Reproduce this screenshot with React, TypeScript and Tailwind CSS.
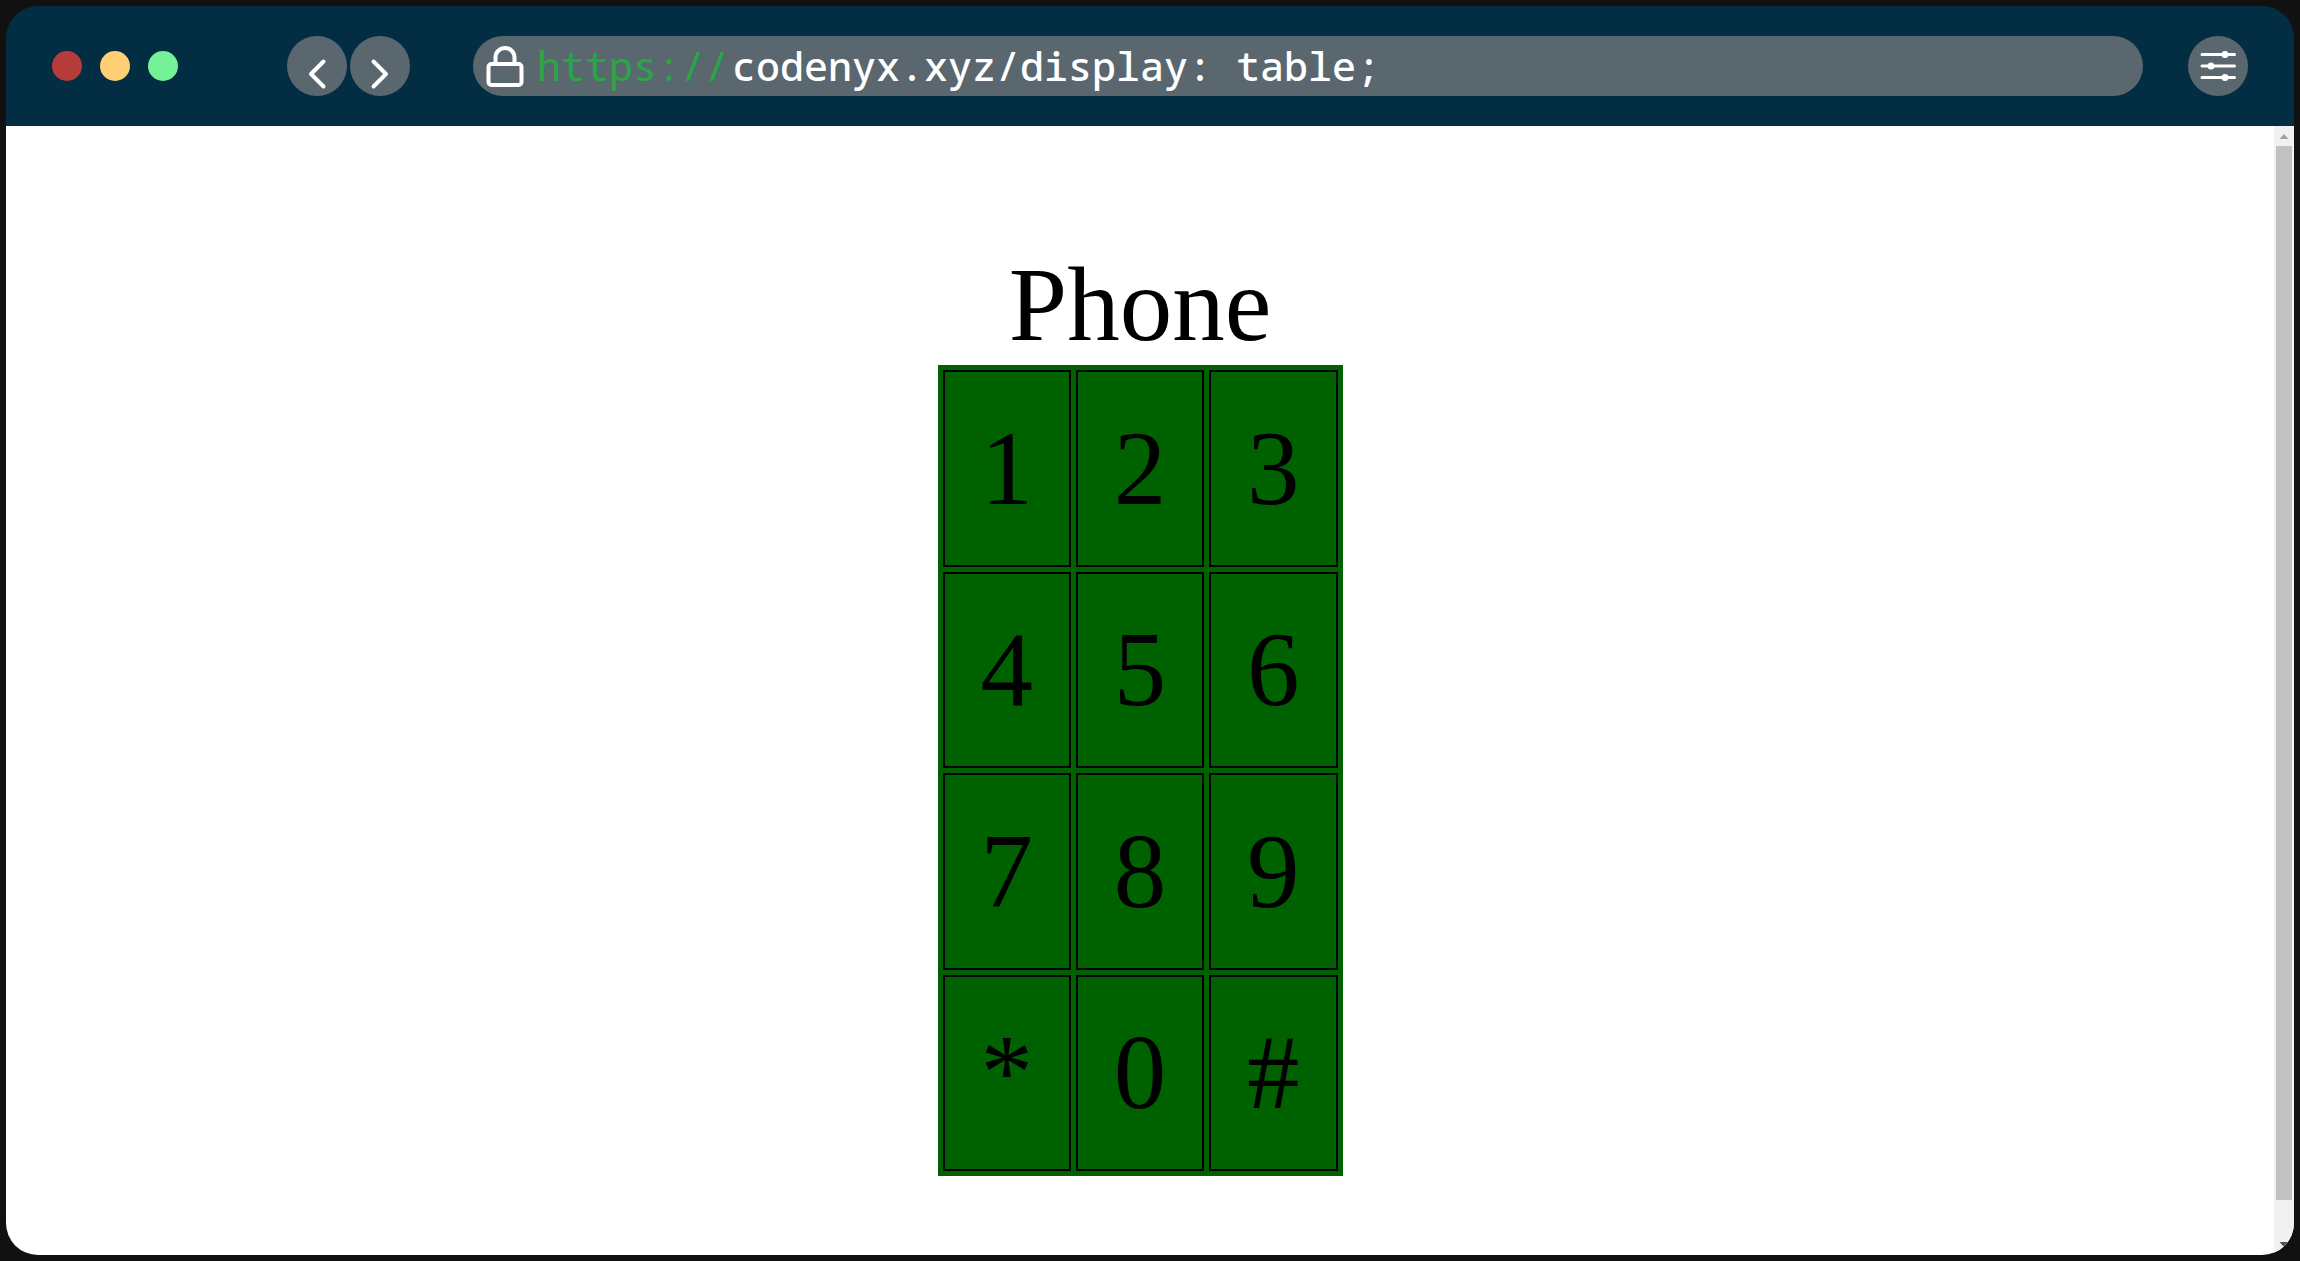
const rows = [
  ["1", "2", "3"],
  ["4", "5", "6"],
  ["7", "8", "9"],
  ["*", "0", "#"],
];

function WindowButtons() {
  return (
    <div className="flex gap-[18px]">
      <button type="button" aria-label="Close" className="size-[30px] rounded-full bg-[#b63c3b]" />
      <button type="button" aria-label="Minimize" className="size-[30px] rounded-full bg-[#ffd073]" />
      <button type="button" aria-label="Maximize" className="size-[30px] rounded-full bg-[#75f197]" />
    </div>
  );
}

function NavButtons() {
  return (
    <div className="flex gap-[3px]">
      <button type="button" aria-label="Back" className="size-[60px] rounded-full bg-[#5a676f]">
        <svg viewBox="0 0 60 60" className="size-full" fill="none" stroke="white" strokeWidth="4" strokeLinecap="round" strokeLinejoin="round">
          <path d="M36.5 25.5 L24 38 L36.5 50.5" />
        </svg>
      </button>
      <button type="button" aria-label="Forward" className="size-[60px] rounded-full bg-[#5a676f]">
        <svg viewBox="0 0 60 60" className="size-full" fill="none" stroke="white" strokeWidth="4" strokeLinecap="round" strokeLinejoin="round">
          <path d="M23.5 25.5 L36 38 L23.5 50.5" />
        </svg>
      </button>
    </div>
  );
}

function AddressBar() {
  return (
    <label className="flex h-[60px] min-w-0 flex-1 items-center rounded-full bg-[#5a676f] pr-8 pl-3 font-['Noto_Sans_Mono','DejaVu_Sans_Mono',monospace] text-[40px] leading-[60px]">
      <svg viewBox="0 0 40 42" className="mr-3 h-[42px] w-10 shrink-0" fill="none" stroke="white" strokeWidth="4">
        <rect x="3.5" y="19" width="33" height="21" rx="3" />
        <path d="M10.5 19 V12.5 a9.5 9.5 0 0 1 19 0 V19" />
      </svg>
      <span className="mr-[3px] text-[#28a745]">https://</span>
      <input
        type="text"
        aria-label="Address"
        defaultValue="codenyx.xyz/display: table;"
        className="h-[60px] min-w-0 flex-1 bg-transparent font-medium text-white outline-none"
      />
    </label>
  );
}

function SettingsButton() {
  return (
    <button type="button" aria-label="Settings" className="size-[60px] shrink-0 rounded-full bg-[#5a676f]">
      <svg viewBox="0 0 60 60" className="size-full" fill="white" stroke="white" strokeWidth="3" strokeLinecap="round">
        <path d="M14 18.5 H46.5 M14 30 H46.5 M14 41.5 H46.5" />
        <g stroke="none">
          <circle cx="37" cy="18.5" r="3.5" />
          <circle cx="23" cy="30" r="3.5" />
          <circle cx="37" cy="41.5" r="3.5" />
        </g>
      </svg>
    </button>
  );
}

function PhoneTable() {
  return (
    <table className="h-[811px] w-[405px] table-fixed border-separate border-spacing-[5px] bg-[#006100] text-center font-['Liberation_Serif',serif] text-[105px] leading-[121px] text-black">
      <caption>Phone</caption>
      <tbody>
        {rows.map((row) => (
          <tr key={row[0]}>
            {row.map((key) => (
              <td key={key} className="border-2 border-black p-0 align-middle">
                {key}
              </td>
            ))}
          </tr>
        ))}
      </tbody>
    </table>
  );
}

function Scrollbar() {
  return (
    <div className="flex w-5 shrink-0 flex-col bg-[#f1f1f1]">
      <svg viewBox="0 0 20 20" className="size-5" fill="#a3a3a3">
        <path d="M5.5 13 L10 8 L14.5 13 Z" />
      </svg>
      <div className="mx-[2px] grow-[19] basis-0 bg-[#c1c1c1]" />
      <div className="flex grow basis-0 flex-col justify-end">
        <svg viewBox="0 0 20 20" className="size-5" fill="#505050">
          <path d="M5.5 7 L10 12 L14.5 7 Z" />
        </svg>
      </div>
    </div>
  );
}

export default function App() {
  return (
    <div className="flex min-h-screen bg-[#111111] p-1.5">
      <div className="flex min-w-0 flex-1 flex-col overflow-hidden rounded-[32px]">
        <header className="flex h-[120px] items-center bg-[#022d42] px-[46px]">
          <WindowButtons />
          <div className="ml-[109px]">
            <NavButtons />
          </div>
          <div className="mr-[45px] ml-[63px] flex min-w-0 flex-1">
            <AddressBar />
          </div>
          <SettingsButton />
        </header>
        <div className="flex flex-1 bg-white">
          <main className="flex flex-1 items-start justify-center pt-[118px]">
            <PhoneTable />
          </main>
          <Scrollbar />
        </div>
      </div>
    </div>
  );
}
